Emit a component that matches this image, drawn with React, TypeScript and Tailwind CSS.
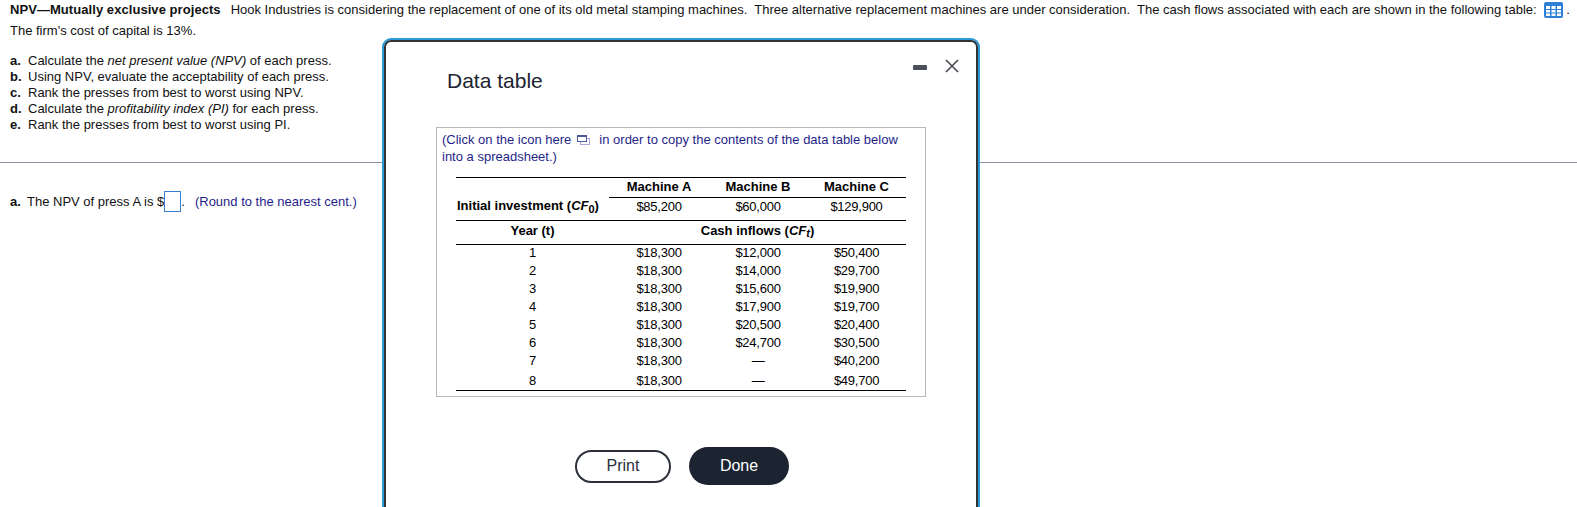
const rows = [
  ["1", "$18,300", "$12,000", "$50,400"],
  ["2", "$18,300", "$14,000", "$29,700"],
  ["3", "$18,300", "$15,600", "$19,900"],
  ["4", "$18,300", "$17,900", "$19,700"],
  ["5", "$18,300", "$20,500", "$20,400"],
  ["6", "$18,300", "$24,700", "$30,500"],
  ["7", "$18,300", "—", "$40,200"],
  ["8", "$18,300", "—", "$49,700"],
];

const tasks = [
  { key: "a.", text: <>Calculate the <i>net present value (NPV)</i> of each press.</> },
  { key: "b.", text: <>Using NPV, evaluate the acceptability of each press.</> },
  { key: "c.", text: <>Rank the presses from best to worst using NPV.</> },
  { key: "d.", text: <>Calculate the <i>profitability index (PI)</i> for each press.</> },
  { key: "e.", text: <>Rank the presses from best to worst using PI.</> },
];

function TableIcon() {
  return (
    <svg width="19" height="16" viewBox="0 0 19 16" className="inline-block align-[-4px]">
      <rect width="19" height="16" rx="2" fill="#2f7fd6" />
      <g fill="#ffffff">
        <rect x="2" y="4" width="4" height="3" />
        <rect x="7.5" y="4" width="4" height="3" />
        <rect x="13" y="4" width="4" height="3" />
        <rect x="2" y="8" width="4" height="2.5" />
        <rect x="7.5" y="8" width="4" height="2.5" />
        <rect x="13" y="8" width="4" height="2.5" />
        <rect x="2" y="11.5" width="4" height="2.5" />
        <rect x="7.5" y="11.5" width="4" height="2.5" />
        <rect x="13" y="11.5" width="4" height="2.5" />
      </g>
    </svg>
  );
}

function CopyIcon() {
  return (
    <svg width="13" height="10" viewBox="0 0 13 10" className="ml-[6px] mr-[9px] inline-block align-[-1px]">
      <rect x="3.5" y="3.5" width="9" height="6" fill="none" stroke="#a9a9d6" />
      <rect x="0.5" y="0.5" width="9" height="6" fill="#ffffff" stroke="#4a5a9c" />
      <rect x="0" y="0" width="10" height="2" fill="#4a5a9c" />
    </svg>
  );
}

export default function App() {
  return (
    <div className="relative h-[507px] overflow-hidden bg-white text-[13px] leading-[16px] text-[#111111] font-['Liberation_Sans',Arial,sans-serif]">
      <div className="pl-[10px] pt-[1px]">
        <p className="h-[18px] whitespace-nowrap leading-[18px]">
          <b className="tracking-[0.06px]">NPV—Mutually exclusive projects</b>
          <span className="ml-[10px]">Hook Industries is considering the replacement of one of its old metal stamping machines.&nbsp; Three alternative replacement machines are under consideration.&nbsp; The cash flows associated with each are shown in the following table:</span>
          <span className="ml-[7px]"><TableIcon /></span> .
        </p>
        <p className="mt-[4px]">The firm's cost of capital is 13%.</p>
        <div className="mt-[14px]">
          {tasks.map((t) => (
            <p key={t.key} className="h-[16px]">
              <b className="inline-block w-[18px]">{t.key}</b>
              {t.text}
            </p>
          ))}
        </div>
      </div>
      <div className="mt-[29px] h-px bg-[#8a93a5]" />
      <p className="mt-[28px] flex items-center pl-[10px]">
        <b className="inline-block w-[17px]">a.</b>
        The NPV of press A is $
        <span className="h-[21px] w-[17px] border border-[#3b7fd0]" />
        <span>.</span>
        <span className="ml-[10px] text-[#1f1f8a]">(Round to the nearest cent.)</span>
      </p>

      <div className="absolute left-[382px] top-[38px] h-[500px] w-[598px] rounded-[9px] border-2 border-[#2a9bd8]">
        <div className="h-full rounded-[7px] border-2 border-[#333333] bg-white pl-[50px] pt-[17px]">
          <div className="flex h-[37px] items-start justify-between pr-[17px]">
            <h2 className="ml-[11px] mt-[7px] text-[21px] leading-[30px] font-normal text-[#1c2331]">Data table</h2>
            <div className="flex items-center gap-[18px]">
              <span className="h-[5px] w-[14px] translate-y-px rounded-[1px] bg-[#4a4f58]" />
              <svg width="14" height="14" viewBox="0 0 14 14" stroke="#4a4f58" strokeWidth="1.7">
                <path d="M1 1 L13 13 M13 1 L1 13" />
              </svg>
            </div>
          </div>

          <div className="mt-[31px] h-[270px] w-[490px] border border-[#b8b8b8] px-[5px] pt-[3px]">
            <p className="w-[470px] leading-[17px] text-[#1f1f8a]">
              (Click on the icon here
              <CopyIcon />
              in order to copy the contents of the data table below
              <br />
              into a spreadsheet.)
            </p>
            <table className="ml-[14px] mt-[12px] w-[450px] table-fixed border-collapse text-center text-black">
              <colgroup>
                <col className="w-[153px]" />
                <col className="w-[100px]" />
                <col className="w-[98px]" />
                <col className="w-[99px]" />
              </colgroup>
              <tbody>
                <tr className="h-[20px] border-t border-black font-bold">
                  <td />
                  <td className="border-b border-black pb-[2px]">Machine A</td>
                  <td className="border-b border-black pb-[2px]">Machine B</td>
                  <td className="border-b border-black pb-[2px]">Machine C</td>
                </tr>
                <tr className="h-[23px]">
                  <td className="whitespace-nowrap pb-[5px] pl-px text-left font-bold">
                    Initial investment (<i>CF</i><sub className="text-[11px]">0</sub>)
                  </td>
                  <td className="pb-[5px] tracking-[-0.25px]">$85,200</td>
                  <td className="pb-[5px] tracking-[-0.25px]">$60,000</td>
                  <td className="pb-[5px] tracking-[-0.25px]">$129,900</td>
                </tr>
                <tr className="h-[24px] border-y border-black font-bold">
                  <td className="pb-[4px]">Year (t)</td>
                  <td colSpan={3} className="pb-[4px]">
                    Cash inflows (<i>CF</i><sub className="text-[11px] italic">t</sub>)
                  </td>
                </tr>
                {rows.map((r, i) => (
                  <tr key={r[0]} className={i === rows.length - 1 ? "h-[20px] border-b border-black" : "h-[18px]"}>
                    {r.map((c, j) => (
                      <td key={j} className={i === rows.length - 1 ? "pt-px tracking-[-0.25px]" : "pb-px tracking-[-0.25px]"}>{c}</td>
                    ))}
                  </tr>
                ))}
              </tbody>
            </table>
          </div>

          <div className="ml-[139px] mt-[50px] flex items-center gap-[18px] text-[16px]">
            <button className="h-[33px] w-[96px] rounded-[17px] border-2 border-[#2b303b] bg-white text-[#2b303b]">Print</button>
            <button className="h-[38px] w-[100px] rounded-[19px] bg-[#1c2331] text-white">Done</button>
          </div>
        </div>
      </div>
    </div>
  );
}
